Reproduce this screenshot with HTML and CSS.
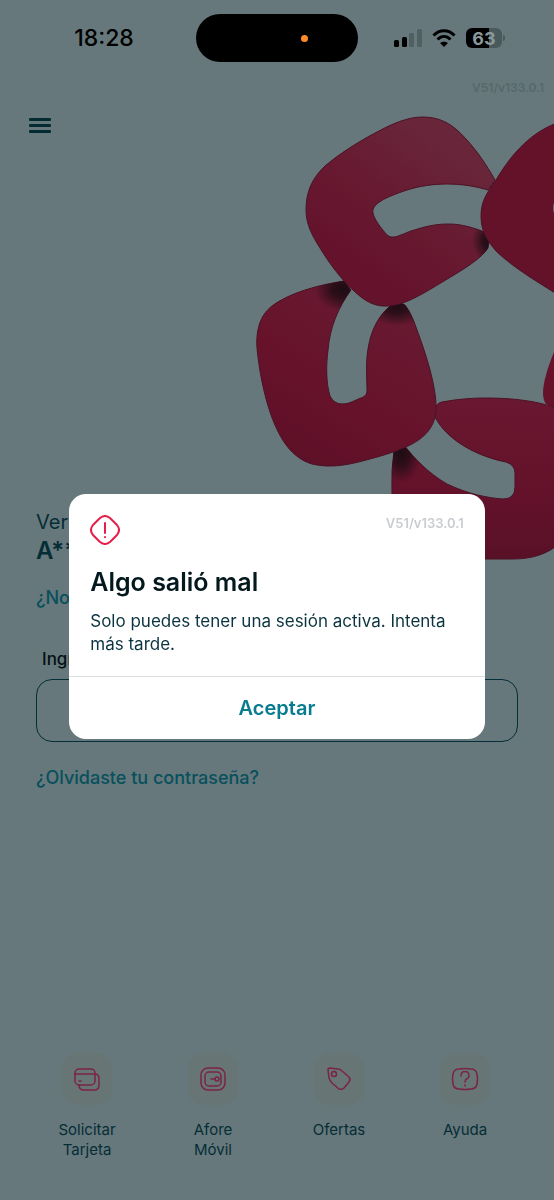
FILE: index.html
```html
<!DOCTYPE html>
<html lang="es">

<head>
    <meta charset="UTF-8">
    <meta name="viewport" content="width=device-width,initial-scale=1">
    <link rel="stylesheet" href="styles.css">
</head>

<body>
    <div class="screen">
        <svg class="flower" viewBox="250 100 304 480" aria-hidden="true">
            <defs>
                <linearGradient id="top" x1="0.2" y1="0.8" x2="0.7" y2="0.1">
                    <stop offset="0" stop-color="#65122c" />
                    <stop offset="0.5" stop-color="#671a31" />
                    <stop offset="1" stop-color="#69263b" />
                </linearGradient>
                <linearGradient id="left" x1="0.2" y1="1" x2="0.8" y2="0">
                    <stop offset="0" stop-color="#5c1027" />
                    <stop offset="0.4" stop-color="#67122b" />
                    <stop offset="1" stop-color="#671c33" />
                </linearGradient>
                <linearGradient id="low" x1="0" y1="0" x2="0" y2="1">
                    <stop offset="0" stop-color="#6a1731" />
                    <stop offset="0.5" stop-color="#65122b" />
                    <stop offset="1" stop-color="#591127" />
                </linearGradient>
                <radialGradient id="shade">
                    <stop offset="0" stop-color="#1d0c13" />
                    <stop offset="0.4" stop-color="#1d0c13" stop-opacity="0.8" />
                    <stop offset="1" stop-color="#1d0c13" stop-opacity="0" />
                </radialGradient>
                <clipPath id="clip-top"><use href="#petal-top" /></clipPath>
                <clipPath id="clip-left"><use href="#petal-left" /></clipPath>
                <clipPath id="clip-low"><use href="#petal-low" /></clipPath>
            </defs>
            <path fill="#67122b" d="M560 338C550 360 543 380 543 393Q543 400 546 404L560 410Z" />
            <path id="petal-low" fill="url(#low)" stroke="#4b1225" d="M435 410Q436 403 442 402C458 399 472 398 485 398C515 398 537 401 560 409V543C548 554 532 559 513 559H400Q392 559 392 545V493Q391 470 394 450L404 445C414 458 428 473 447 484C468 494 488 498 503 499Q515 499 515 487V473Q515 465 506 462C480 457 448 442 435 417Z" />
            <g clip-path="url(#clip-low)">
                <ellipse fill="url(#shade)" cx="401" cy="452" rx="20" ry="31" />
            </g>
            <path id="petal-left" fill="url(#left)" stroke="#4b1225" d="M344 281C318 285 289 293 272 306C259 316 256 332 257 348C259 370 264 395 271 415C280 440 292 458 312 464C332 469 352 464 370 459C385 455 397 451 408 446C425 438 435 427 436 410C437 388 426 354 417 330Q411 312 405 305Q398 300 390 306C376 318 369 335 367 357C366 370 367 383 367 391Q367 396 361 398C355 400 350 404 342 404Q334 404 330 396C326 383 326 365 328 350C330 327 338 308 351 290Z" />
            <g clip-path="url(#clip-left)">
                <ellipse fill="url(#shade)" cx="343" cy="289" rx="28" ry="22" />
                <ellipse fill="url(#shade)" cx="397" cy="305" rx="31" ry="21" />
            </g>
            <path id="petal-top" fill="url(#top)" stroke="#4b1225" d="M495 180C486 164 477 151 466 139C453 124 440 117 423 117C407 117 392 124 377 132C358 142 339 154 325 166C312 178 306 192 306 210C306 225 313 237 320 248C329 263 341 279 353 290C365 302 376 307 388 306C407 305 427 291 449 278C464 269 482 258 488 248L489 240Q488 234 482 231C468 226 459 224 448 224C434 224 424 227 411 231C400 235 393 240 387 235C381 228 374 219 373 213C371 204 386 197 407 190C432 182 462 182 488 190Z" />
            <g clip-path="url(#clip-top)">
                <ellipse fill="url(#shade)" cx="490" cy="241" rx="18" ry="22" />
            </g>
            <path fill="#64112a" stroke="#4b1225" d="M560 122C532 131 512 153 496 180C486 194 481 202 481 216C481 232 488 242 497 252C514 268 536 281 560 296Z" />
            <ellipse class="gap" cx="557" cy="208" rx="4" ry="8" />
        </svg>

        <div class="status">
            <span class="time">18:28</span>
            <span class="island"></span>
            <span class="signals">
                <svg width="28" height="18" viewBox="0 0 28 18" aria-hidden="true">
                    <rect x="0" y="11" width="5" height="7" rx="1.5" />
                    <rect x="8" y="8" width="5" height="10" rx="1.5" />
                    <rect class="faint" x="15" y="4" width="5" height="14" rx="1.5" />
                    <rect class="faint" x="23" y="0" width="5" height="18" rx="1.5" />
                </svg>
                <svg width="24" height="18" viewBox="0 0 24 18" aria-hidden="true">
                    <path class="wave" d="M1.500 6.500C7.500 .2 16.500 .2 22.500 6.500M5.500 10.500C9.500 6.500 14.500 6.500 18.500 10.500" />
                    <path d="M8 14Q12 11 16 14L12 18Z" />
                </svg>
                <span class="battery">63</span>
            </span>
        </div>

        <header class="top">
            <span class="version">V51/v133.0.1</span>
            <button class="menu" aria-label="Menú"><span></span><span></span><span></span></button>
        </header>

        <main class="login">
            <p class="hello">Veri</p>
            <p class="name">A**</p>
            <a class="link" href="#">¿No</a>
            <label class="label" for="password">Ingr</label>
            <input class="field" id="password" type="password">
            <a class="link" href="#">¿Olvidaste tu contraseña?</a>
        </main>

        <nav class="shortcuts">
            <a href="#">
                <span class="tile"><svg viewBox="0 0 28 28"><rect x="2" y="4" width="20" height="16" rx="4" /><path d="M2 9H22M6 16H8M6 20Q6 25 11 25H21Q26 25 26 20V14Q26 9 22 9" /></svg></span>
                Solicitar<br>Tarjeta
            </a>
            <a href="#">
                <span class="tile"><svg viewBox="0 0 28 28"><rect x="2" y="3" width="24" height="22" rx="7" /><rect x="6" y="7" width="16" height="14" rx="4" /><circle cx="18" cy="14" r="2" /><path d="M12 14H16" /></svg></span>
                Afore<br>Móvil
            </a>
            <a href="#">
                <span class="tile"><svg viewBox="0 0 28 28"><path d="M5 3L13 4Q15 4 17 6L24 12Q26 14 24 17L19 23Q17 25 14 24L7 18Q5 16 4 13L3 5Q3 3 5 3Z" /><circle cx="9" cy="9" r="2.500" /></svg></span>
                Ofertas
            </a>
            <a href="#">
                <span class="tile"><svg viewBox="0 0 28 28"><path d="M8 4Q14 3 20 4Q25 4 26 9Q27 14 26 19Q25 24 20 24Q14 25 8 24Q3 24 2 19Q1 14 2 9Q3 4 8 4Z" /><path d="M10 11C10 5 18 5 18 11C18 14 14 13 14 17M14 20V21" /></svg></span>
                Ayuda
            </a>
        </nav>
    </div>

    <div class="overlay">
        <div class="modal" role="alertdialog" aria-labelledby="title">
            <div class="message">
                <div class="row">
                    <svg class="alert" viewBox="0 0 30 30" aria-hidden="true">
                        <path d="M10 3Q15 -1 20 3L27 10Q31 15 27 20L20 27Q15 31 10 27L3 20Q-1 15 3 10Z" />
                        <path d="M15 8V18M15 22V22.200" />
                    </svg>
                    <span class="version">V51/v133.0.1</span>
                </div>
                <h1 id="title">Algo salió mal</h1>
                <p>Solo puedes tener una sesión activa. Intenta más tarde.</p>
            </div>
            <button class="accept">Aceptar</button>
        </div>
    </div>
</body>

</html>
```

FILE: styles.css
```css
* {
    margin: 0;
    padding: 0;
    box-sizing: border-box;
    font-family: Inter, "Liberation Sans", sans-serif;
}

body {
    background-color: #66787b;
    color: #052d36;
}

a {
    color: inherit;
    text-decoration: none;
}

button {
    border: none;
    background: none;
    cursor: pointer;
}

.screen {
    position: relative;
    display: flex;
    flex-direction: column;
    min-height: 100vh;
    overflow: hidden;
}

/* artwork lies behind the whole page */
.flower {
    position: absolute;
    top: 100px;
    right: 0;
    width: 304px;
    height: 480px;
    z-index: -1;
}

.gap {
    fill: #66787b;
}

.status {
    display: grid;
    grid-template-columns: 1fr 162px 1fr;
    align-items: center;
    padding-top: 14px;
    color: black;
}

.time {
    padding-left: 12px;
    text-align: center;
    font-size: 23px;
    font-weight: 500;
}

.island {
    display: flex;
    align-items: center;
    justify-content: flex-end;
    height: 48px;
    padding-right: 50px;
    border-radius: 24px;
    background-color: black;
}

.island::after {
    content: "";
    width: 7px;
    height: 7px;
    border-radius: 50%;
    background-color: #ff8b26;
}

.signals {
    display: flex;
    align-items: center;
    justify-content: center;
    gap: 10px;
    padding-right: 16px;
}

.faint {
    fill: #4f5f62;
}

.wave {
    fill: none;
    stroke: black;
    stroke-width: 3;
}

.battery {
    display: flex;
    align-items: center;
    justify-content: center;
    position: relative;
    width: 36px;
    height: 20px;
    border-radius: 6px;
    background: linear-gradient(to right, black 63%, #4a595c 63%);
    color: #8b999c;
    font-size: 18px;
    font-weight: 700;
}

.battery::after {
    content: "";
    position: absolute;
    left: 37px;
    width: 2px;
    height: 6px;
    border-radius: 0 2px 2px 0;
    background-color: #4a595c;
}

.top {
    display: flex;
    flex-direction: column;
    align-items: flex-start;
    gap: 20px;
    height: 448px;
    padding: 18px 10px 0 29px;
}

.version {
    align-self: flex-end;
    color: #56686b;
    font-size: 12px;
    line-height: 16px;
    font-weight: 600;
}

.menu {
    display: grid;
    gap: 3px;
    width: 22px;
    padding: 2px 0;
}

.menu span {
    height: 3px;
    border-radius: 1px;
    background-color: #032b32;
}

.login {
    display: flex;
    flex-direction: column;
    align-items: flex-start;
    padding: 0 36px;
}

.hello {
    font-size: 20px;
    line-height: 24px;
}

.name {
    margin-top: 2px;
    font-size: 24px;
    line-height: 30px;
    font-weight: 600;
}

.link {
    margin-top: 20px;
    font-size: 18px;
    line-height: 24px;
    font-weight: 500;
    color: #07505c;
}

.label {
    margin: 37px 0 8px 6px;
    font-size: 17px;
    line-height: 24px;
    font-weight: 500;
    color: #041014;
}

.field {
    width: 100%;
    height: 63px;
    padding: 0 16px;
    border: 1px solid #042e38;
    border-radius: 16px;
    background: none;
    font-size: 20px;
}

.field + .link {
    margin-top: 24px;
}

.shortcuts {
    display: grid;
    grid-template-columns: repeat(4, 1fr);
    margin-top: auto;
    padding: 0 26px 0 24px;
    height: 147px;
    text-align: center;
    font-size: 15px;
    line-height: 20px;
}

.tile {
    display: grid;
    place-items: center;
    width: 50px;
    height: 52px;
    margin: 0 auto 15px;
    border-radius: 16px;
    background-color: #687575;
}

.tile svg {
    width: 28px;
    height: 28px;
    fill: none;
    stroke: #7b2443;
    stroke-width: 1.5;
    stroke-linecap: round;
    stroke-linejoin: round;
}

.overlay {
    position: fixed;
    inset: 0;
    display: flex;
    align-items: center;
    justify-content: center;
    padding-top: 32px;
}

.modal {
    width: 75%;
    border-radius: 17px;
    background-color: white;
}

.message {
    padding: 21px 21px 20px;
}

.row {
    display: flex;
    justify-content: space-between;
}

.row .version {
    align-self: flex-start;
    color: #c9cdd1;
    font-size: 13px;
}

.alert {
    width: 30px;
    height: 30px;
    fill: none;
    stroke: #e51d48;
    stroke-width: 2;
    stroke-linecap: round;
}

h1 {
    margin: 21px 0 12px;
    font-size: 25px;
    line-height: 32px;
    font-weight: 600;
    color: #03191e;
}

.message p {
    font-size: 17px;
    line-height: 23px;
    color: #0b3440;
}

.accept {
    width: 100%;
    height: 63px;
    border-top: 1px solid #dcdfe0;
    font-size: 20px;
    font-weight: 600;
    color: #087b91;
}
```
